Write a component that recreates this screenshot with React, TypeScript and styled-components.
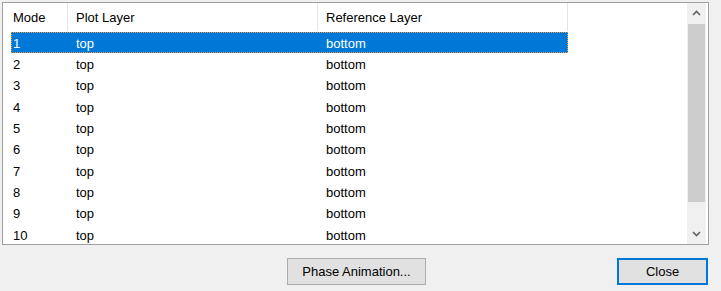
import styled, { createGlobalStyle } from "styled-components";

const GlobalStyle = createGlobalStyle`
    html, body {
        margin: 0;
        padding: 0;
        background: #f0f0f0;
    }
    body {
        font-family: "Liberation Sans", Arial, sans-serif;
        font-size: 13px;
        color: #000;
    }
`;

const Dialog = styled.div`
    width: 721px;
    height: 291px;
    padding: 2px 0 0 2px;
    box-sizing: border-box;
    display: flex;
    flex-direction: column;
`;

const ListBox = styled.div`
    width: 707px;
    height: 243px;
    box-sizing: border-box;
    border: 1px solid #a0a0a0;
    background: #fff;
    display: flex;
    overflow: hidden;
`;

const ListBody = styled.div`
    flex: 1;
    display: flex;
    flex-direction: column;
    overflow: hidden;
`;

const Row = styled.div<{ $selected?: boolean }>`
    display: grid;
    grid-template-columns: 57px 250px 250px;
    margin-left: 8px;
    width: 557px;
    height: 21.33px;
    flex-shrink: 0;
    align-items: center;
    box-sizing: border-box;
    padding-top: 1px;
    background: ${(p) => (p.$selected ? "#0078d7" : "transparent")};
    color: ${(p) => (p.$selected ? "#fff" : "#000")};
    outline: ${(p) => (p.$selected ? "1px dotted #e89a4c" : "none")};
    outline-offset: -1px;
`;

const HeaderRow = styled.div`
    display: grid;
    grid-template-columns: 57px 250px 250px;
    margin-left: 8px;
    height: 28px;
    margin-bottom: 1px;
    flex-shrink: 0;
`;

const HeaderCell = styled.div<{ $first?: boolean }>`
    display: flex;
    align-items: center;
    padding-left: ${(p) => (p.$first ? "2px" : "8px")};
    border-right: 1px solid #e5e5e5;
    white-space: nowrap;
`;

const Cell = styled.div<{ $first?: boolean }>`
    padding-left: ${(p) => (p.$first ? "2px" : "8px")};
    white-space: nowrap;
`;

const ScrollBar = styled.div`
    width: 19px;
    margin-right: 2px;
    display: flex;
    flex-direction: column;
    background: #f0f0f0;
`;

const ScrollArrow = styled.div`
    height: 20px;
    display: flex;
    align-items: center;
    justify-content: center;
    flex-shrink: 0;
`;

const ScrollTrack = styled.div`
    flex: 1;
    display: flex;
    flex-direction: column;
    padding: 1px 1px 20px;
`;

const ScrollThumb = styled.div`
    height: 178px;
    background: #cdcdcd;
`;

const ButtonRow = styled.div`
    display: flex;
    align-items: center;
    margin-top: 13px;
    padding: 0 1px 0 285px;
    width: 707px;
    box-sizing: border-box;
`;

const Button = styled.button<{ $default?: boolean }>`
    height: 27px;
    box-sizing: border-box;
    font-family: "Liberation Sans", Arial, sans-serif;
    font-size: 13px;
    color: #000;
    background: #e1e1e1;
    border: ${(p) => (p.$default ? "2px solid #0078d7" : "1px solid #adadad")};
    padding: 0;
`;

const PhaseButton = styled(Button)`
    width: 139px;
`;

const CloseButton = styled(Button)`
    width: 91px;
    margin-left: auto;
`;

const Chevron = ({ up }: { up?: boolean }) => (
    <svg width={9} height={6} viewBox="0 0 9 6">
        <path
            d={up ? "M1 5 L4.5 1.5 L8 5" : "M1 1 L4.5 4.5 L8 1"}
            fill="none"
            stroke="#606060"
            strokeWidth={1.6}
        />
    </svg>
);

const rows = Array.from({ length: 10 }, (_, i) => i + 1);

const App = () => {
    return (
        <>
            <GlobalStyle />
            <Dialog>
                <ListBox>
                    <ListBody>
                        <HeaderRow>
                            <HeaderCell $first>Mode</HeaderCell>
                            <HeaderCell>Plot Layer</HeaderCell>
                            <HeaderCell>Reference Layer</HeaderCell>
                        </HeaderRow>
                        {rows.map((n) => (
                            <Row key={n} $selected={n === 1}>
                                <Cell $first>{n}</Cell>
                                <Cell>top</Cell>
                                <Cell>bottom</Cell>
                            </Row>
                        ))}
                    </ListBody>
                    <ScrollBar>
                        <ScrollArrow>
                            <Chevron up />
                        </ScrollArrow>
                        <ScrollTrack>
                            <ScrollThumb />
                        </ScrollTrack>
                        <ScrollArrow>
                            <Chevron />
                        </ScrollArrow>
                    </ScrollBar>
                </ListBox>
                <ButtonRow>
                    <PhaseButton>Phase Animation...</PhaseButton>
                    <CloseButton $default>Close</CloseButton>
                </ButtonRow>
            </Dialog>
        </>
    );
};

export default App;
